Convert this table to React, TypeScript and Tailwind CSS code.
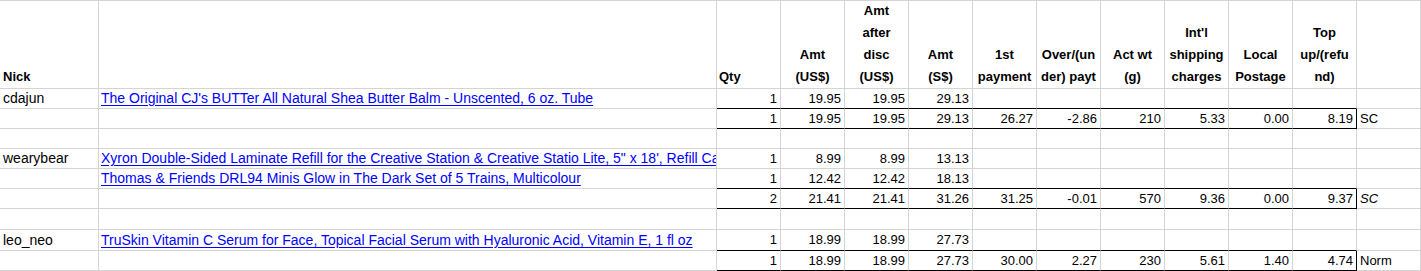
import React from "react";

type Row = {
  h: string;
  nick?: string;
  desc?: string;
  nums?: string[]; // cols 3..12 (10 values)
  tag?: string;
  tagItalic?: boolean;
  blackBottom?: boolean;
  total?: boolean;
};

const rows: Row[] = [
  {
    h: "h-[20px]",
    nick: "cdajun",
    desc: "The Original CJ's BUTTer All Natural Shea Butter Balm - Unscented, 6 oz. Tube",
    nums: ["1", "19.95", "19.95", "29.13", "", "", "", "", "", ""],
    blackBottom: true,
  },
  {
    h: "h-[20px]",
    nums: ["1", "19.95", "19.95", "29.13", "26.27", "-2.86", "210", "5.33", "0.00", "8.19"],
    tag: "SC",
    blackBottom: true,
    total: true,
  },
  { h: "h-[20px]" },
  {
    h: "h-[20px]",
    nick: "wearybear",
    desc: "Xyron Double-Sided Laminate Refill for the Creative Station & Creative Statio Lite, 5\" x 18', Refill Cartridge",
    nums: ["1", "8.99", "8.99", "13.13", "", "", "", "", "", ""],
  },
  {
    h: "h-[20px]",
    desc: "Thomas & Friends DRL94 Minis Glow in The Dark Set of 5 Trains, Multicolour",
    nums: ["1", "12.42", "12.42", "18.13", "", "", "", "", "", ""],
    blackBottom: true,
  },
  {
    h: "h-[20px]",
    nums: ["2", "21.41", "21.41", "31.26", "31.25", "-0.01", "570", "9.36", "0.00", "9.37"],
    tag: "SC",
    tagItalic: true,
    blackBottom: true,
    total: true,
  },
  { h: "h-[21px]" },
  {
    h: "h-[21px]",
    nick: "leo_neo",
    desc: "TruSkin Vitamin C Serum for Face, Topical Facial Serum with Hyaluronic Acid, Vitamin E, 1 fl oz",
    nums: ["1", "18.99", "18.99", "27.73", "", "", "", "", "", ""],
    blackBottom: true,
  },
  {
    h: "h-[20px]",
    nums: ["1", "18.99", "18.99", "27.73", "30.00", "2.27", "230", "5.61", "1.40", "4.74"],
    tag: "Norm",
    blackBottom: true,
    total: true,
  },
];

const headers: { lines: string[]; align: "left" | "center" }[] = [
  { lines: ["Qty"], align: "left" },
  { lines: ["Amt", "(US$)"], align: "center" },
  { lines: ["Amt", "after", "disc", "(US$)"], align: "center" },
  { lines: ["Amt", "(S$)"], align: "center" },
  { lines: ["1st", "payment"], align: "center" },
  { lines: ["Over/(un", "der) payt"], align: "center" },
  { lines: ["Act wt", "(g)"], align: "center" },
  { lines: ["Int'l", "shipping", "charges"], align: "center" },
  { lines: ["Local", "Postage"], align: "center" },
  { lines: ["Top", "up/(refu", "nd)"], align: "center" },
];

const comic = "font-['Comic_Sans_MS','Liberation_Sans',sans-serif]";
const tahoma = "font-['Tahoma','Liberation_Sans',sans-serif]";

export default function App() {
  return (
    <div className="w-[1421px] h-[271px] bg-white overflow-hidden text-black">
      <div className="grid grid-cols-[99px_618px_repeat(11,64px)] border-t border-[#d4d4d4]">
        {/* header */}
        <div className={`h-[88px] border-b border-r border-[#d4d4d4] flex items-end pl-[3px] ${comic} font-bold text-[13px] leading-[22px]`}>
          Nick
        </div>
        <div className="h-[88px] border-b border-r border-[#d4d4d4]" />
        {headers.map((hd, i) => (
          <div
            key={i}
            className={`h-[88px] border-b border-r border-[#d4d4d4] flex flex-col justify-end ${comic} font-bold text-[13px] leading-[22px] whitespace-nowrap overflow-hidden ${
              hd.align === "left" ? "items-start pl-[2px]" : "items-center"
            }`}
          >
            {hd.lines.map((l, j) => (
              <div key={j}>{l}</div>
            ))}
          </div>
        ))}
        <div className="h-[88px] border-b border-r border-[#d4d4d4]" />

        {rows.map((r, ri) => (
          <React.Fragment key={ri}>
            <div className={`${r.h} border-b border-r border-[#d4d4d4] flex items-center pl-[3px] ${comic} text-[14px] whitespace-nowrap overflow-hidden`}>
              {r.nick}
            </div>
            <div
              className={`${r.h} border-b border-r border-[#d4d4d4] ${
                r.blackBottom ? "relative" : ""
              } flex items-center pl-[2px] ${comic} text-[14px] whitespace-nowrap overflow-hidden`}
            >
              {r.desc && (
                <a href="#" className="text-[#0000ff] underline underline-offset-[2px]">
                  {r.desc}
                </a>
              )}
            </div>
            {Array.from({ length: 10 }).map((_, ci) => {
              const v = r.nums ? r.nums[ci] : "";
              const bottom = r.blackBottom ? "border-b-black" : "";
              const right = r.total && ci === 9 ? "border-r-black" : "";
              return (
                <div
                  key={ci}
                  className={`${r.h} border-b border-r border-[#d4d4d4] ${bottom} ${right} flex items-center justify-end pr-[3px] ${tahoma} text-[13px] whitespace-nowrap`}
                >
                  {v}
                </div>
              );
            })}
            <div
              className={`${r.h} border-b border-r border-[#d4d4d4] flex items-center pl-[3px] ${
                r.tagItalic ? `${comic} italic` : tahoma
              } text-[13px] whitespace-nowrap`}
            >
              {r.tag}
            </div>
          </React.Fragment>
        ))}
      </div>
    </div>
  );
}
